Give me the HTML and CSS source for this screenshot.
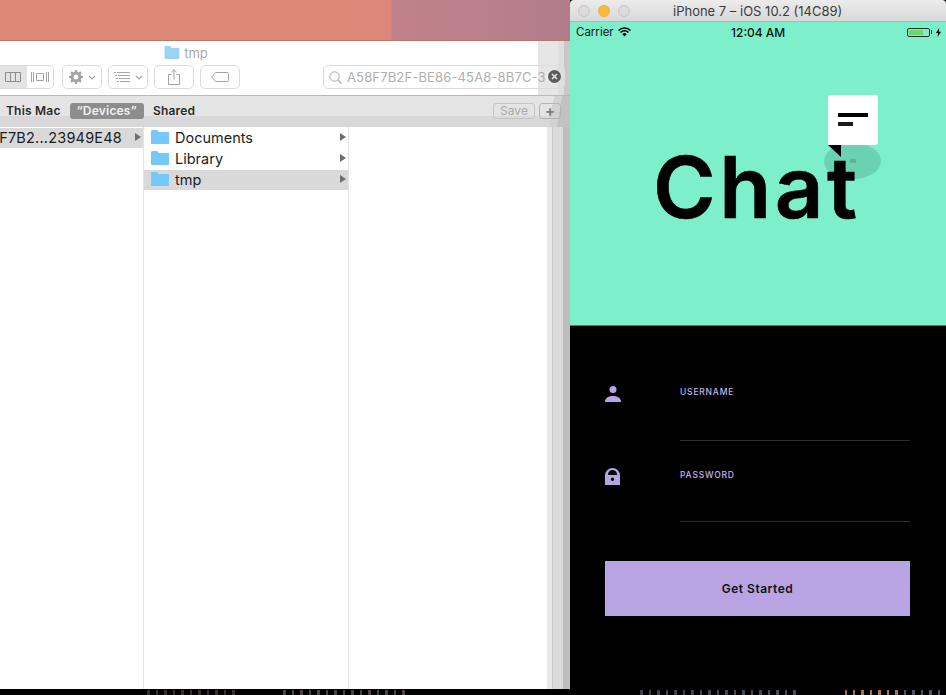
FILE: index.html
```html
<!DOCTYPE html>
<html lang="en">
<head>
  <meta charset="UTF-8" />
  <title>Chat</title>
  <link rel="stylesheet" href="styles.css">
</head>
<body>
  <div class="desktop">
    <div class="wall-top"></div>
    <div class="wall-bottom"></div>

    <!-- finder window -->
    <div class="finder">
      <div class="finder-title">
        <svg class="folder folder-title" viewBox="0 0 16 14"><path d="M0 1.5C0 .7.5 0 1.2 0h4c.5 0 .8.2 1 .6L7 2h8c.6 0 1 .4 1 1v10c0 .6-.4 1-1 1H1c-.6 0-1-.4-1-1z"/></svg>
        <span>tmp</span>
      </div>
      <div class="toolbar">
        <div class="seg">
          <div class="seg-item seg-on">
            <svg width="16" height="10" viewBox="0 0 16 10"><path d="M.5.5h15v9H.5zM5.5.5v9M10.5.5v9" fill="none" stroke="#8d8d8d"/></svg>
          </div>
          <div class="seg-item">
            <svg width="18" height="12" viewBox="0 0 18 12"><path d="M5.5 2.5h7v7h-7zM.5 1v10M2.5 1v10M15.5 1v10M17.5 1v10" fill="none" stroke="#a5a5a5"/></svg>
          </div>
        </div>
        <div class="tool tool-wide">
          <svg width="14" height="14" viewBox="0 0 14 14"><path d="M6 0h2l.3 1.8 1.4.6L11.200 1.300 12.700 2.800 11.600 4.300l.6 1.400L14 6v2l-1.800.3-.6 1.400 1.100 1.500-1.500 1.500-1.500-1.100-1.400.6L8 14H6l-.3-1.800-1.400-.6-1.500 1.100-1.500-1.500 1.100-1.500-.6-1.400L0 8V6l1.800-.3.6-1.400-1.100-1.500 1.500-1.500 1.500 1.100 1.400-.6zM7 4.500a2.500 2.500 0 1 0 0 5 2.500 2.500 0 0 0 0-5z" fill="#a3a3a3" fill-rule="evenodd"/></svg>
          <svg width="8" height="5" viewBox="0 0 8 5"><path d="M1 1l3 3 3-3" fill="none" stroke="#a3a3a3" stroke-width="1.200"/></svg>
        </div>
        <div class="tool tool-wide">
          <svg width="16" height="10" viewBox="0 0 16 10"><path d="M0 .5h2M3 .5h13M1 3.500h2M4 3.500h12M2 6.500h2M5 6.500h11M3 9.500h2M6 9.500h10" fill="none" stroke="#a8a8a8"/></svg>
          <svg width="8" height="5" viewBox="0 0 8 5"><path d="M1 1l3 3 3-3" fill="none" stroke="#a3a3a3" stroke-width="1.200"/></svg>
        </div>
        <div class="tool">
          <svg width="12" height="16" viewBox="0 0 12 16"><path d="M3.500 5.500H.5v10h11v-10h-3M6 10.500V.8M3.500 3L6 .8 8.500 3" fill="none" stroke="#a3a3a3"/></svg>
        </div>
        <div class="tool">
          <svg width="18" height="10" viewBox="0 0 18 10"><path d="M4.500.5h12a1 1 0 0 1 1 1v7a1 1 0 0 1-1 1h-12L.7 5z" fill="none" stroke="#a3a3a3"/></svg>
        </div>
        <div class="search">
          <svg width="13" height="13" viewBox="0 0 13 13"><circle cx="5.500" cy="5.500" r="4.700" fill="none" stroke="#a8a8a8"/><path d="M9 9l3.500 3.500" stroke="#a8a8a8" stroke-width="1.200"/></svg>
          <span class="search-text">A58F7B2F-BE86-45A8-8B7C-3C</span>
          <span class="search-clear">
            <svg width="13" height="13" viewBox="0 0 13 13"><circle cx="6.500" cy="6.500" r="6.500" fill="#5d5d5d"/><path d="M4 4l5 5M9 4l-5 5" stroke="#e4e4e4" stroke-width="1.600"/></svg>
          </span>
        </div>
      </div>
      <div class="scope">
        <b>This Mac</b>
        <b class="scope-on">“Devices”</b>
        <b>Shared</b>
        <span class="scope-save">Save</span>
        <span class="scope-plus">+</span>
      </div>
      <div class="columns">
        <div class="col col-one">
          <div class="row row-sel"><span class="row-cut">F7B2...23949E48</span><i class="arrow"></i></div>
        </div>
        <div class="col col-two">
          <div class="row">
            <svg class="folder" viewBox="0 0 18 14"><path d="M0 1.500C0 .7.500 0 1.200 0h4.600c.5 0 .8.200 1 .6L7.500 2H17c.6 0 1 .4 1 1v10c0 .6-.4 1-1 1H1c-.6 0-1-.4-1-1z"/></svg>
            <span class="row-name">Documents</span><i class="arrow"></i>
          </div>
          <div class="row">
            <svg class="folder" viewBox="0 0 18 14"><path d="M0 1.500C0 .7.500 0 1.200 0h4.600c.5 0 .8.200 1 .6L7.500 2H17c.6 0 1 .4 1 1v10c0 .6-.4 1-1 1H1c-.6 0-1-.4-1-1z"/></svg>
            <span class="row-name">Library</span><i class="arrow"></i>
          </div>
          <div class="row row-sel">
            <svg class="folder" viewBox="0 0 18 14"><path d="M0 1.500C0 .7.500 0 1.200 0h4.600c.5 0 .8.200 1 .6L7.500 2H17c.6 0 1 .4 1 1v10c0 .6-.4 1-1 1H1c-.6 0-1-.4-1-1z"/></svg>
            <span class="row-name">tmp</span><i class="arrow"></i>
          </div>
        </div>
        <div class="col col-three"></div>
      </div>
      <div class="ghost ghost-top"></div>
      <div class="ghost ghost-mid"></div>
      <div class="ghost ghost-side"></div>
    </div>

    <!-- simulator window -->
    <div class="sim">
      <div class="sim-title">
        <i class="light"></i><i class="light light-on"></i><i class="light"></i>
        <span class="sim-name">iPhone 7 – iOS 10.2 (14C89)</span>
      </div>
      <div class="phone">
        <div class="hero">
          <div class="status">
            <span class="carrier">Carrier
              <svg width="13" height="10" viewBox="0 0 13 10"><path d="M.5 3.500a8.500 8.500 0 0 1 12 0M2.500 5.500a5.700 5.700 0 0 1 8 0" fill="none" stroke="#000" stroke-width="1.500"/><path d="M4.300 7.200a3 3 0 0 1 4.400 0L6.500 9.600z"/></svg>
            </span>
            <span class="clock">12:04 AM</span>
            <span class="batt">
              <span class="batt-body"><span class="batt-fill"></span></span><span class="batt-tip"></span>
              <svg width="5" height="9" viewBox="0 0 5 9"><path d="M3.200 0L0 5h2l-.4 4L5 3.700H2.900z"/></svg>
            </span>
          </div>
          <div class="logo">
            <div class="shadow"><i></i></div>
            <div class="word">Chat</div>
            <div class="bubble">
              <span class="line-long"></span>
              <span class="line-short"></span>
            </div>
            <div class="tail"></div>
          </div>
        </div>
        <div class="form">
          <div class="field">
            <svg class="field-icon" viewBox="0 0 17 16"><circle cx="8" cy="3.500" r="3.500"/><path d="M0 16c0-4 3.500-6 8-6s8 2 8 6z"/></svg>
            <div class="field-box">
              <label>USERNAME</label>
            </div>
          </div>
          <div class="field">
            <svg class="field-icon field-lock" viewBox="0 0 15 17"><path d="M0 17V7.500a7.500 7.500 0 0 1 15 0V17zM3 7h9v-.5a4.500 4.500 0 0 0-9 0zM7.500 9.500a1.700 1.700 0 1 0 0 3.400 1.700 1.700 0 0 0 0-3.400z" fill-rule="evenodd"/></svg>
            <div class="field-box field-box-last">
              <label>PASSWORD</label>
            </div>
          </div>
          <button class="start">Get Started</button>
        </div>
      </div>
    </div>
  </div>
</body>
</html>
```

FILE: styles.css
```css
html, body {
  margin: 0;
  padding: 0;
}
body {
  font-family: "Inter", "Liberation Sans", sans-serif;
  background: #000;
}
.desktop {
  position: relative;
  width: 946px;
  height: 695px;
  overflow: hidden;
  background: #000;
}
.wall-top {
  height: 41px;
  box-sizing: border-box;
  border-bottom: 1px solid #b87768;
  background: linear-gradient(90deg, #de8977 0, #dd8878 200px, #dc8779 391px, #c0828a 392px, #bb808a 480px, #b07c8c 570px);
}
/* photo showing under the windows: colour runs cut up by a black speckle */
.wall-bottom {
  position: absolute;
  left: 0;
  right: 0;
  top: 689px;
  height: 6px;
  background:
    repeating-linear-gradient(90deg, #000 0 3px, transparent 3px 5px, #000 5px 11px, transparent 11px 14px, #000 14px 17px),
    linear-gradient(#000 1px, transparent 1px),
    linear-gradient(90deg, #000 143px, #3a2e2c 143px, #3a2e2c 240px, #000 240px, #000 280px, #4a4446 280px, #4a4446 410px, #000 410px, #000 640px, #3c4048 640px, #46505e 800px, #000 800px, #000 845px, #a5683a 845px, #b47c48 895px, #4c5560 905px, #4c5560 946px);
}

/* finder */
.finder {
  position: absolute;
  left: 0;
  top: 41px;
  width: 570px;
  height: 648px;
  background: #fff;
  display: flex;
  flex-direction: column;
  overflow: hidden;
}
.finder-title {
  height: 23px;
  display: flex;
  align-items: center;
  justify-content: center;
  gap: 4px;
  padding-right: 198px;
  font-size: 13px;
  color: #a9a9a9;
}
.folder {
  width: 18px;
  height: 14px;
  fill: #74c9f8;
  flex: none;
}
.folder-title {
  width: 16px;
  height: 13px;
  fill: #9ad4f2;
}
.toolbar {
  height: 30px;
  display: flex;
  align-items: flex-start;
  border-bottom: 1px solid #b9b9b9;
  padding-top: 1px;
  gap: 6px;
}
.seg {
  display: flex;
  height: 24px;
  width: 54px;
  margin-right: 2px;
  box-sizing: border-box;
  border: 1px solid #dcdcdc;
  border-left: 0;
  border-radius: 0 5px 5px 0;
  overflow: hidden;
}
.seg-item {
  flex: 1;
  display: flex;
  align-items: center;
  justify-content: center;
}
.seg-on {
  background: #e3e3e3;
}
.tool {
  width: 40px;
  height: 24px;
  box-sizing: border-box;
  border: 1px solid #dcdcdc;
  border-radius: 5px;
  display: flex;
  align-items: center;
  justify-content: center;
  gap: 5px;
}
.search {
  width: 242px;
  height: 24px;
  box-sizing: border-box;
  margin-left: 77px;
  padding-left: 5px;
  border: 1px solid #dcdcdc;
  border-radius: 5px;
  display: flex;
  align-items: center;
  gap: 5px;
  position: relative;
  z-index: 2;
  overflow: hidden;
}
.search-text {
  font-size: 13px;
  letter-spacing: 0.15px;
  color: #b0b0b0;
  white-space: nowrap;
}
.search-clear {
  position: absolute;
  right: 3px;
  top: 4px;
  line-height: 0;
  background: #eaeaea;
  box-shadow: -3px 0 0 #eaeaea;
  border-radius: 7px;
}
.scope {
  height: 31px;
  box-sizing: border-box;
  background: linear-gradient(#e4e4e4 20px, #d8d8d8 20px);
  display: flex;
  align-items: flex-start;
  padding: 7px 9px 0 6px;
  font-size: 12px;
  line-height: 16px;
  color: #2b2b2b;
  position: relative;
}
.scope b {
  font-weight: 600;
  letter-spacing: 0.2px;
}
.scope-on {
  margin: 0 9px;
  background: #8d8d8d;
  color: #f0f0f0;
  border-radius: 3px;
  padding: 0 7px;
  height: 16px;
}
.scope-save {
  margin-left: auto;
  width: 42px;
  height: 16px;
  box-sizing: border-box;
  line-height: 14px;
  text-align: center;
  border: 1px solid #c5c5c5;
  border-radius: 3px;
  color: #a9a9a9;
  font-size: 12px;
  position: relative;
  z-index: 2;
}
.scope-plus {
  margin-left: 4px;
  width: 22px;
  height: 16px;
  box-sizing: border-box;
  line-height: 13px;
  text-align: center;
  border: 1px solid #b5b5b5;
  border-radius: 3px;
  color: #7d7d7d;
  font-size: 15px;
  font-weight: 700;
  position: relative;
  z-index: 2;
}
.columns {
  flex: 1;
  display: flex;
}
.col {
  box-sizing: border-box;
  border-right: 1px solid #e4e4e4;
  padding-top: 1px;
}
.col-one {
  width: 144px;
  overflow: hidden;
}
.col-two {
  width: 205px;
}
.col-three {
  flex: 1;
  border-right: 0;
}
.row {
  height: 20px;
  box-sizing: border-box;
  padding-bottom: 2px;
  margin-bottom: 1px;
  display: flex;
  align-items: center;
  position: relative;
  font-size: 14.500px;
  color: #1d1d1d;
  padding-left: 7px;
  gap: 6px;
}
.row-sel {
  background: #d9d9d9;
}
.row-cut {
  position: absolute;
  right: 21px;
  white-space: nowrap;
  letter-spacing: 0.2px;
}
.row-name {
  flex: 1;
}
.arrow {
  position: absolute;
  right: 2px;
  top: 5px;
  width: 0;
  height: 0;
  border-left: 6px solid #6e6e6e;
  border-top: 4px solid transparent;
  border-bottom: 4px solid transparent;
}

/* leftover frames at the edge of the finder */
.ghost {
  position: absolute;
  right: 0;
  pointer-events: none;
}
.ghost-top {
  top: 0;
  width: 32px;
  height: 54px;
  background: linear-gradient(90deg, #e6e6e6 0 20px, #dedede 20px 26px, #c8c8c8 26px);
  z-index: 1;
}
.ghost-mid {
  top: 55px;
  width: 26px;
  height: 31px;
  background: linear-gradient(100deg, rgba(205,205,205,0) 0 10px, #d2d2d2 10px 18px, #c2c2c2 18px);
  z-index: 1;
}
.ghost-side {
  top: 86px;
  bottom: 0;
  width: 23px;
  background: linear-gradient(90deg, #e8e8e8 0 5px, #c9c9c9 5px 6px, #dadada 6px 16px, #bdbdbd 16px);
}

/* simulator */
.sim {
  position: absolute;
  left: 570px;
  top: 0;
  width: 376px;
  height: 689px;
  background: #000;
}
.sim-title {
  height: 22px;
  box-sizing: border-box;
  background: linear-gradient(#ececec, #d8d8d8);
  border-bottom: 1px solid #b5b5b5;
  border-radius: 4px 4px 0 0;
  display: flex;
  align-items: center;
  gap: 8px;
  padding-left: 8px;
  position: relative;
}
.light {
  width: 12px;
  height: 12px;
  box-sizing: border-box;
  border-radius: 50%;
  background: #dcdcdc;
  border: 1px solid #c4c4c4;
}
.light-on {
  background: #f6b93b;
  border-color: #eab040;
}
.sim-name {
  position: absolute;
  left: 103px;
  font-size: 13px;
  color: #3c3c3c;
  white-space: nowrap;
}
.phone {
  height: 667px;
  display: flex;
  flex-direction: column;
}
.hero {
  height: 303px;
  background: #7df0cb;
  border-bottom: 1px solid #3f7f6c;
  position: relative;
}
.status {
  height: 20px;
  display: flex;
  align-items: center;
  justify-content: space-between;
  padding: 0 5px 0 6px;
  font-size: 12px;
  color: #111;
}
.carrier {
  display: flex;
  align-items: center;
  gap: 4px;
  font-size: 11.500px;
}
.clock {
  position: absolute;
  left: 161px;
  font-weight: 500;
  white-space: nowrap;
}
.batt {
  display: flex;
  align-items: center;
  gap: 1px;
}
.batt-body {
  width: 23px;
  height: 9px;
  box-sizing: border-box;
  border: 1px solid #2c2c2c;
  border-radius: 2px;
  padding: 1px;
  display: block;
}
.batt-fill {
  display: block;
  width: 75%;
  height: 100%;
  background: #67da6b;
}
.batt-tip {
  width: 1px;
  height: 4px;
  margin-right: 3px;
  background: #2c2c2c;
}
.logo {
  position: absolute;
  left: 0;
  top: 0;
  width: 100%;
  height: 100%;
}
.word {
  position: absolute;
  left: 83px;
  top: 114px;
  font-size: 85px;
  line-height: 104px;
  font-weight: 600;
  -webkit-text-stroke: 0.6px #000;
  letter-spacing: 3.500px;
  color: #000;
}
.shadow {
  position: absolute;
  left: 254px;
  top: 121px;
  width: 57px;
  height: 36px;
  border-radius: 50%;
  background: #6ad2b1;
}
.shadow i {
  position: absolute;
  left: 26px;
  top: 16px;
  width: 6px;
  height: 4px;
  background: #58b698;
}
.bubble {
  position: absolute;
  left: 258px;
  top: 73px;
  width: 50px;
  height: 50px;
  background: #fff;
  border-radius: 3px 3px 3px 0;
  display: flex;
  flex-direction: column;
  gap: 5px;
  padding: 18px 10px 0;
  box-sizing: border-box;
}
.line-long {
  width: 30px;
  height: 4px;
  background: #000;
}
.line-short {
  width: 15px;
  height: 4px;
  background: #1c1c1c;
}
.tail {
  position: absolute;
  left: 258px;
  top: 123px;
  width: 0;
  height: 0;
  border-top: 12px solid #000;
  border-left: 13px solid transparent;
}
.form {
  flex: 1;
  background: #000;
  padding: 58px 36px 0 35px;
}
.field {
  display: flex;
  height: 83px;
}
.field-icon {
  fill: #b8a4e3;
  width: 17px;
  height: 16px;
  flex: none;
  margin-top: 2px;
  margin-right: 58px;
}
.field-lock {
  width: 15px;
  height: 17px;
  margin-top: 1px;
  margin-right: 60px;
}
.field-box {
  width: 230px;
  height: 56px;
  border-bottom: 1px solid #2e2e2e;
}
.field-box-last {
  height: 54px;
}
.field-box label {
  display: block;
  font-size: 8.500px;
  line-height: 12px;
  letter-spacing: 0.8px;
  font-weight: 500;
  color: #c6b6ee;
  margin-top: 2px;
}
.start {
  display: block;
  width: 305px;
  height: 55px;
  margin-top: 11px;
  border: 0;
  background: #b8a4e3;
  color: #111;
  font-family: inherit;
  font-size: 12px;
  font-weight: 600;
  letter-spacing: 0.5px;
}
```
